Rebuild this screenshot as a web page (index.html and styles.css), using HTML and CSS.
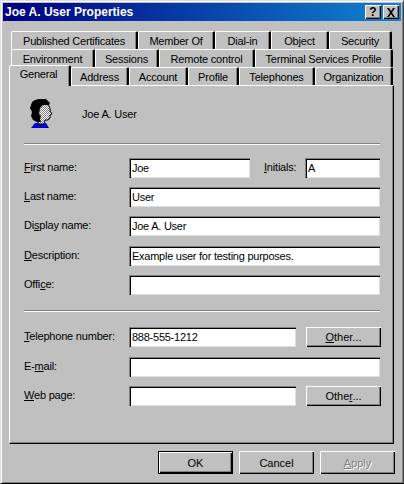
FILE: index.html
```html
<!DOCTYPE html>
<html lang="en">
<head>
<meta charset="utf-8">
<title>Joe A. User Properties</title>
<link rel="stylesheet" href="styles.css">
</head>
<body>
<div class="window">
  <div class="titlebar">
    <span class="title">Joe A. User Properties</span>
    <div class="caption-buttons">
      <button class="caption-btn help">?</button>
      <button class="caption-btn close">
        <svg width="10" height="9" viewBox="0 0 10 9"><path d="M1 0h2l2 3 2-3h2L6 4.500 9 9H7L5 6 3 9H1l3-4.500z" fill="#000"/></svg>
      </button>
    </div>
  </div>
  <div class="tabs">
    <div class="tab-row inset">
      <div class="tab w127">Published Certificates</div>
      <div class="tab w77">Member Of</div>
      <div class="tab w56">Dial-in</div>
      <div class="tab w58">Object</div>
      <div class="tab w63">Security</div>
    </div>
    <div class="tab-row inset">
      <div class="tab w84">Environment</div>
      <div class="tab w64">Sessions</div>
      <div class="tab w96">Remote control</div>
      <div class="tab w138">Terminal Services Profile</div>
    </div>
    <div class="tab-row">
      <div class="tab active w62">General</div>
      <div class="tab w58">Address</div>
      <div class="tab w59">Account</div>
      <div class="tab w51">Profile</div>
      <div class="tab w76">Telephones</div>
      <div class="tab w78">Organization</div>
    </div>
  </div>
  <div class="page">
    <div class="user">
      <svg class="avatar" width="24" height="30" viewBox="0 0 24 30">
        <defs>
          <pattern id="dither" width="2" height="2" patternUnits="userSpaceOnUse">
            <rect width="2" height="2" fill="#fff"/>
            <rect width="1" height="1" fill="#808080"/>
            <rect x="1" y="1" width="1" height="1" fill="#808080"/>
          </pattern>
        </defs>
        <path d="M2 29l4-5h11l3 5z" fill="#0000d0"/>
        <path d="M14 5h5l2 4v3l2 3-2 1v3l-2 2h-3l-1 4H9V9z" fill="url(#dither)" stroke="#000"/>
        <path d="M10 0h7l4 4-1 2h-6l-3 3-1 6 2 2-1 3 1 3H8l-4-2-2-4 1-4-2-4 2-6 3-2z" fill="#000"/>
      </svg>
      <span>Joe A. User</span>
    </div>
    <div class="sep"></div>
    <div class="group first-group">
      <div class="row">
        <label class="lab"><u>F</u>irst name:</label>
        <input class="field w121" type="text" value="Joe">
        <label class="lab-inline"><u>I</u>nitials:</label>
        <input class="field grow" type="text" value="A">
      </div>
      <div class="row">
        <label class="lab"><u>L</u>ast name:</label>
        <input class="field grow" type="text" value="User">
      </div>
      <div class="row">
        <label class="lab">Di<u>s</u>play name:</label>
        <input class="field grow" type="text" value="Joe A. User">
      </div>
      <div class="row nudge">
        <label class="lab"><u>D</u>escription:</label>
        <input class="field grow" type="text" value="Example user for testing purposes.">
      </div>
      <div class="row">
        <label class="lab">Offi<u>c</u>e:</label>
        <input class="field grow" type="text" value="">
      </div>
    </div>
    <div class="sep second-sep"></div>
    <div class="group second-group">
      <div class="row">
        <label class="lab"><u>T</u>elephone number:</label>
        <input class="field w167" type="text" value="888-555-1212">
        <button class="btn other"><u>O</u>ther...</button>
      </div>
      <div class="row nudge">
        <label class="lab">E-<u>m</u>ail:</label>
        <input class="field grow" type="text" value="">
      </div>
      <div class="row">
        <label class="lab"><u>W</u>eb page:</label>
        <input class="field w167" type="text" value="">
        <button class="btn other">Othe<u>r</u>...</button>
      </div>
    </div>
  </div>
  <div class="actions">
    <button class="btn action default">OK</button>
    <button class="btn action">Cancel</button>
    <button class="btn action disabled"><u>A</u>pply</button>
  </div>
</div>
</body>
</html>
```

FILE: styles.css
```css
* { box-sizing: border-box; }
html, body { margin: 0; padding: 0; }
body {
  width: 404px;
  height: 484px;
  overflow: hidden;
  background: #c0c0c0;
  font-family: "Liberation Sans", Arial, sans-serif;
  font-size: 11px;
  letter-spacing: -0.2px;
  color: #000;
}
.window {
  width: 404px;
  height: 484px;
  padding: 3px 3px 0;
  background: #c0c0c0;
  border-left: 1px solid #dfdfdf;
  border-top: 1px solid #dfdfdf;
  border-right: 1px solid #404040;
  border-bottom: 1px solid #000;
  box-shadow: inset 1px 1px 0 #fff, inset -1px -1px 0 #808080;
  display: flex;
  flex-direction: column;
}
.titlebar {
  height: 18px;
  margin: -1px -1px 0 -1px;
  flex: none;
  padding: 0 2px;
  display: flex;
  align-items: center;
  justify-content: space-between;
  background: linear-gradient(90deg, #000080, #1084d0);
}
.title { color: #fff; font-weight: bold; font-size: 12px; letter-spacing: 0; }
.caption-buttons { display: flex; gap: 2px; }
.caption-btn {
  width: 16px;
  height: 14px;
  padding: 0;
  border: 0;
  background: #c0c0c0;
  box-shadow: inset 1px 1px 0 #fff, inset -1px -1px 0 #000, inset -2px -2px 0 #808080;
  font: bold 12px/14px "Liberation Sans", sans-serif;
  display: flex;
  align-items: center;
  justify-content: center;
}
.tabs {
  margin: 10px 0 0 5px;
  width: 384px;
  flex: none;
}
.tab-row { display: flex; height: 18px; }
.inset { padding-left: 2px; }
.tab {
  flex: none;
  height: 18px;
  padding-top: 2px;
  text-align: center;
  line-height: 15px;
  white-space: nowrap;
  background: #c0c0c0;
  border-top: 1px solid #fff;
  border-left: 1px solid #fff;
  border-right: 2px solid #000;
  border-top-left-radius: 2px;
  border-top-right-radius: 2px;
  box-shadow: inset -1px 0 0 #808080;
}
.active {
  position: relative;
  z-index: 1;
  height: 21px;
  margin-top: -2px;
  padding-top: 1px;
  padding-right: 2px;
}
.w51 { width: 51px; }
.w56 { width: 56px; }
.w58 { width: 58px; }
.w59 { width: 59px; }
.w62 { width: 62px; }
.w63 { width: 63px; }
.w64 { width: 64px; }
.w76 { width: 76px; }
.w77 { width: 77px; }
.w78 { width: 78px; }
.w84 { width: 84px; }
.w96 { width: 96px; }
.w127 { width: 127px; }
.w138 { width: 138px; }
.page {
  margin-left: 5px;
  width: 385px;
  height: 359px;
  flex: none;
  padding: 14px 13px 0 14px;
  background: #c0c0c0;
  border-top: 1px solid #fff;
  border-left: 1px solid #fff;
  border-right: 1px solid #000;
  border-bottom: 1px solid #000;
  box-shadow: inset -1px -1px 0 #808080;
}
.user {
  height: 28px;
  display: flex;
  align-items: center;
  gap: 29px;
  padding-left: 5px;
}
.avatar { flex: none; }
.sep {
  height: 2px;
  margin-top: 15px;
  background: #808080;
  border-bottom: 1px solid #fff;
}
.group { display: flex; flex-direction: column; gap: 9px; }
.first-group { margin-top: 13px; }
.second-sep { margin-top: 15px; }
.second-group { margin-top: 15px; }
.row { display: flex; align-items: center; height: 20px; }
.nudge { margin-top: 1px; }
.lab { width: 105px; flex: none; white-space: nowrap; padding-bottom: 2px; }
.lab-inline { width: 55px; flex: none; padding: 0 0 2px 14px; }
.field {
  height: 20px;
  margin: 0;
  padding: 0 2px 0 3px;
  border: 0;
  outline: 0;
  border-radius: 0;
  background: #fff;
  font: 11px "Liberation Sans", Arial, sans-serif;
  letter-spacing: -0.25px;
  color: #000;
  box-shadow: inset 1px 1px 0 #808080, inset 2px 2px 0 #000, inset -1px -1px 0 #dfdfdf;
}
.grow { flex: 1; min-width: 0; }
.w121 { width: 121px; flex: none; }
.w167 { width: 167px; flex: none; }
.btn {
  padding: 0;
  border: 0;
  border-radius: 0;
  background: #c0c0c0;
  color: #000;
  font: 11px "Liberation Sans", Arial, sans-serif;
  box-shadow: inset 1px 1px 0 #fff, inset -1px -1px 0 #000, inset -2px -2px 0 #808080;
}
.other { width: 75px; height: 20px; margin-left: 10px; flex: none; }
.actions {
  display: flex;
  justify-content: flex-end;
  gap: 6px;
  margin-top: 7px;
  padding-right: 5px;
}
.action { width: 75px; height: 23px; }
.default {
  box-shadow: inset 0 0 0 1px #000, inset 2px 2px 0 #fff, inset -2px -2px 0 #000, inset -3px -3px 0 #808080;
}
.disabled { color: #808080; text-shadow: 1px 1px 0 #fff; }
```
